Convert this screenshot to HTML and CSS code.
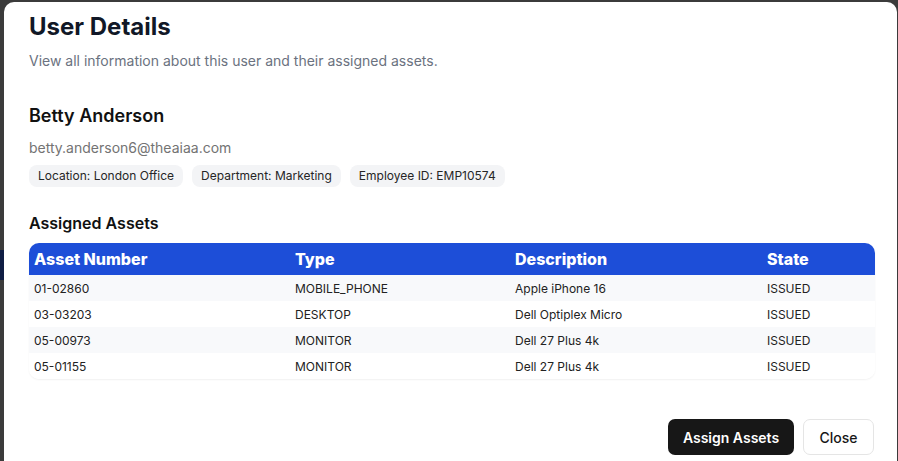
FILE: index.html
```html
<!DOCTYPE html>
<html lang="en">
<head>
<meta charset="utf-8">
<title>User Details</title>
<link rel="stylesheet" href="styles.css">
</head>
<body>
<div class="backdrop">
  <div class="edge-band"></div>
  <div class="modal">
    <header class="modal-header">
      <h1 class="title">User Details</h1>
      <p class="subtitle">View all information about this user and their assigned assets.</p>
    </header>
    <section class="user">
      <h2 class="user-name">Betty Anderson</h2>
      <p class="user-email">betty.anderson6@theaiaa.com</p>
      <div class="badges">
        <span class="badge">Location: London Office</span>
        <span class="badge">Department: Marketing</span>
        <span class="badge">Employee ID: EMP10574</span>
      </div>
    </section>
    <section class="assets">
      <h3 class="section-title">Assigned Assets</h3>
      <div class="table-wrap">
        <table class="table">
          <thead>
            <tr>
              <th class="c1">Asset Number</th>
              <th class="c2">Type</th>
              <th class="c3">Description</th>
              <th class="c4">State</th>
            </tr>
          </thead>
          <tbody>
            <tr><td>01-02860</td><td>MOBILE_PHONE</td><td>Apple iPhone 16</td><td>ISSUED</td></tr>
            <tr><td>03-03203</td><td>DESKTOP</td><td>Dell Optiplex Micro</td><td>ISSUED</td></tr>
            <tr><td>05-00973</td><td>MONITOR</td><td>Dell 27 Plus 4k</td><td>ISSUED</td></tr>
            <tr><td>05-01155</td><td>MONITOR</td><td>Dell 27 Plus 4k</td><td>ISSUED</td></tr>
          </tbody>
        </table>
      </div>
    </section>
    <footer class="modal-footer">
      <button class="btn btn-primary">Assign Assets</button>
      <button class="btn btn-outline">Close</button>
    </footer>
  </div>
</div>
</body>
</html>
```

FILE: styles.css
```css
* { box-sizing: border-box; }
html, body {
  margin: 0;
  padding: 0;
  width: 898px;
  height: 461px;
  overflow: hidden;
  background: #3b3b3b;
  font-family: Inter, "Noto Sans", sans-serif;
}
.backdrop {
  position: relative;
  width: 898px;
  height: 461px;
  padding: 2px 1px 0 4px;
}
.edge-band {
  position: absolute;
  left: 0;
  top: 250px;
  width: 4px;
  height: 30px;
  background: #0f1d44;
}
.modal {
  position: relative;
  background: #ffffff;
  border-radius: 10px;
  height: 470px;
  padding: 11px 23px 0 25px;
  display: flex;
  flex-direction: column;
}
.title {
  margin: 0;
  font-size: 24px;
  line-height: 28px;
  font-weight: 700;
  color: #111827;
}
.subtitle {
  margin: 10px 0 0;
  font-size: 14px;
  line-height: 20px;
  color: #6b7280;
}
.user { margin-top: 33px; }
.user-name {
  margin: 0;
  font-size: 18px;
  line-height: 24px;
  font-weight: 600;
  color: #111111;
}
.user-email {
  margin: 10px 0 0;
  font-size: 14px;
  line-height: 20px;
  color: #737373;
}
.badges {
  display: flex;
  gap: 9px;
  margin-top: 7px;
}
.badge {
  background: #f3f4f6;
  border-radius: 8px;
  height: 22px;
  padding: 0 9px;
  font-size: 12px;
  line-height: 22px;
  color: #262626;
  font-weight: 400;
}
.assets { margin-top: 25px; }
.section-title {
  margin: 0;
  font-size: 16px;
  line-height: 22px;
  font-weight: 600;
  color: #111111;
}
.table-wrap {
  margin-top: 9px;
  width: 846px;
  border-radius: 10px;
  overflow: hidden;
  box-shadow: 0 1px 2px rgba(0,0,0,0.06);
}
.table {
  width: 100%;
  border-collapse: collapse;
  table-layout: fixed;
}
.table th {
  background: #1d4ed8;
  color: #ffffff;
  text-align: left;
  font-size: 16px;
  font-weight: 800;
  height: 32px;
  padding: 0 5px;
}
.c1 { width: 261px; }
.c2 { width: 220px; }
.c3 { width: 252px; }
.table td {
  height: 26px;
  padding: 0 5px;
  font-size: 12px;
  color: #222222;
}
.table tbody tr:nth-child(odd) td { background: #f8f9fb; }
.table tbody tr:nth-child(even) td { background: #ffffff; }
.modal-footer {
  display: flex;
  justify-content: flex-end;
  gap: 9px;
  margin-top: 40px;
}
.btn {
  height: 36px;
  border-radius: 7px;
  font-family: inherit;
  font-size: 14px;
  font-weight: 600;
  cursor: pointer;
}
.btn-primary {
  background: #171717;
  color: #ffffff;
  border: none;
  width: 126px;
}
.btn-outline {
  background: #ffffff;
  color: #171717;
  border: 1px solid #e5e5e5;
  width: 71px;
  font-weight: 500;
}
```
